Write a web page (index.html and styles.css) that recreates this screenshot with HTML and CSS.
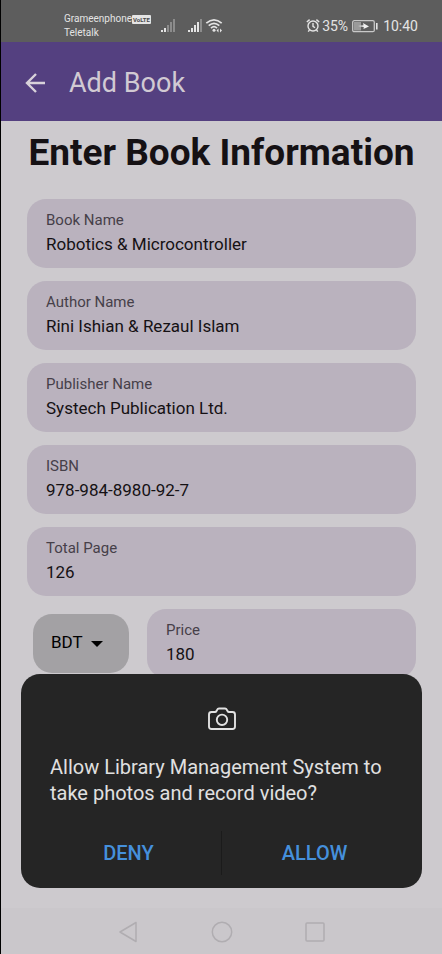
FILE: index.html
```html
<!DOCTYPE html>
<html lang="en">
<head>
<meta charset="utf-8">
<meta name="viewport" content="width=device-width, initial-scale=1">
<title>Add Book</title>
<link rel="stylesheet" href="styles.css">
</head>
<body>
<div class="screen">
  <div class="status">
    <div class="carriers">
      <div class="carrier">Grameenphone <span class="volte">VoLTE</span></div>
      <div class="carrier">Teletalk</div>
    </div>
    <svg class="signals" width="64" height="16" viewBox="0 0 64 16" aria-hidden="true">
      <g fill="#e4e4e4">
        <path d="M0 12h2v2H0zM3 10h2v4H3zM27 12h2v2h-2zM30 10h2v4h-2zM33 7h2v7h-2zM36 4h2v10h-2z"/>
        <path d="M6 7h2v7H6zM9 4h2v10H9zM12 1h2v13h-2zM39 1h2v13h-2z" opacity=".35"/>
        <circle cx="53" cy="12.300" r="1.500"/>
        <path d="M55.500 12.500 57.500 10.500v4zM61 12.500 59 10.500v4z"/>
      </g>
      <g fill="none" stroke="#e4e4e4" stroke-width="1.700">
        <path d="M45.300 5.200Q53-1.600 60.700 5.200M47.700 7.700Q53 3 58.300 7.700M50 10.100Q53 7.300 56 10.100"/>
      </g>
    </svg>
    <div class="power">
      <svg width="14" height="16" viewBox="0 0 14 16" fill="none" stroke="#e4e4e4" stroke-width="1.400" aria-hidden="true">
        <circle cx="7" cy="8" r="5"/><path d="M7 5v3.300l2 1.500M.8 4 3.600 1.600M13.200 4l-2.800-2.400M3.500 12l-1.300 1.600M10.500 12l1.300 1.600"/>
      </svg>
      <span>35%</span>
      <svg class="battery" width="26" height="14" viewBox="0 0 26 14" aria-hidden="true">
        <rect x=".7" y="1.700" width="21.600" height="11" rx="1.500" fill="none" stroke="#c8c8c8" stroke-width="1.300"/>
        <path d="M2 3h7v8.500H2z" fill="#9a9a9a"/>
        <path d="M24 4h1.600v6.500H24z" fill="#e4e4e4"/>
        <path d="M6 7.100 11.500 6.300 11 4 17 7.500l-5.500 2.400.3-1.900z" fill="#f0f0f0"/>
      </svg>
      <span>10:40</span>
    </div>
  </div>

  <header class="appbar">
    <button class="back" type="button" aria-label="Back">
      <svg width="20" height="20" viewBox="0 0 20 20" fill="none" stroke="currentColor" stroke-width="2.400"><path d="M20 10H2M11 1 2 10l9 9"/></svg>
    </button>
    <div class="appbar-title">Add Book</div>
  </header>

  <main class="content">
    <h1>Enter Book Information</h1>
    <form class="form">
      <div class="field"><label for="name">Book Name</label><input id="name" type="text" value="Robotics &amp; Microcontroller"></div>
      <div class="field"><label for="author">Author Name</label><input id="author" type="text" value="Rini Ishian &amp; Rezaul Islam"></div>
      <div class="field"><label for="publisher">Publisher Name</label><input id="publisher" type="text" value="Systech Publication Ltd."></div>
      <div class="field"><label for="isbn">ISBN</label><input id="isbn" type="text" value="978-984-8980-92-7"></div>
      <div class="field"><label for="pages">Total Page</label><input id="pages" type="text" value="126"></div>
      <div class="price-row">
        <div class="currency">
          <select aria-label="Currency"><option>BDT</option></select>
          <svg class="caret" width="12" height="6" viewBox="0 0 12 6" aria-hidden="true"><path d="M0 0h12L6 6z" fill="#000"/></svg>
        </div>
        <div class="field"><label for="price">Price</label><input id="price" type="text" value="180"></div>
      </div>
    </form>
  </main>

  <nav class="navbar">
    <button type="button" aria-label="Back"><svg width="22" height="22" viewBox="0 0 22 22"><path d="M18 1.500v19L2 11z"/></svg></button>
    <button type="button" aria-label="Home"><svg width="22" height="22" viewBox="0 0 22 22"><circle cx="11" cy="11" r="9.700"/></svg></button>
    <button type="button" aria-label="Recent apps"><svg width="22" height="22" viewBox="0 0 22 22"><rect x="2" y="2" width="18" height="18" rx="1"/></svg></button>
  </nav>

  <div class="dialog" role="dialog" aria-labelledby="question">
    <svg class="camera" width="28" height="24" viewBox="0 0 28 24" fill="none" stroke="#e2e2e2" stroke-width="1.900" stroke-linejoin="round" aria-hidden="true">
      <path d="M3.500 5H7q1 0 1.500-1l.7-1.300Q9.700 1.500 11 1.500h6q1.300 0 1.800 1.200L19.500 4q.5 1 1.500 1h3.500Q27 5 27 7.500v12q0 2.500-2.500 2.500h-21Q1 22 1 19.500v-12Q1 5 3.500 5z"/>
      <circle cx="14" cy="12.800" r="5.200"/>
    </svg>
    <p id="question">Allow Library Management System to take photos and record video?</p>
    <div class="actions">
      <button type="button">DENY</button>
      <button type="button">ALLOW</button>
    </div>
  </div>
</div>
</body>
</html>
```

FILE: styles.css
```css
* { box-sizing: border-box; }

body {
  margin: 0;
  background: #cdcace;
  color: #151114;
  font-family: Roboto, "Liberation Sans", sans-serif;
}

button, input, select { font: inherit; color: inherit; border: 0; padding: 0; margin: 0; background: none; }
button { cursor: pointer; }
svg { display: block; }

.screen {
  min-height: 100vh;
  display: flex;
  flex-direction: column;
  border-left: 1px solid #000;
}

.status {
  height: 42px;
  display: flex;
  align-items: center;
  padding: 10px 24px 0 63px;
  background: #5d5d5d;
  color: #e4e4e4;
}

.carriers { width: 97px; font-size: 10px; line-height: 14px; white-space: nowrap; }
.carrier { display: flex; align-items: center; }
.volte {
  padding: 0 1px;
  border-radius: 1px;
  background: #e4e4e4;
  color: #4a4a4a;
  font-size: 6px;
  line-height: 9px;
  font-weight: 700;
}

.power {
  margin-left: auto;
  display: flex;
  align-items: center;
  gap: 2px;
  font-size: 14px;
  line-height: 20px;
}
.battery { margin: 0 3px 0 2px; }

.appbar {
  height: 79px;
  display: flex;
  align-items: center;
  gap: 24px;
  padding: 2px 24px 0;
  background: #544080;
  color: #d1cad3;
}
.back { color: #d8d2da; }
.appbar-title { font-size: 27px; line-height: 32px; }

.content { flex: 1; padding: 9px 26px 0; }

h1 {
  margin: 0;
  font-size: 37px;
  line-height: 46px;
  font-weight: 700;
  text-align: center;
  white-space: nowrap;
}

.form {
  display: flex;
  flex-direction: column;
  gap: 13px;
  padding-top: 23px;
}

.field {
  height: 69px;
  min-width: 0;
  flex: 1 1 auto;
  display: flex;
  flex-direction: column;
  padding: 10px 19px 0;
  border-radius: 19px;
  background: #bab2be;
}
.field label { color: #464049; font-size: 15px; line-height: 22px; }
.field input { width: 100%; height: 26px; font-size: 17px; line-height: 26px; outline: 0; }

.price-row { display: flex; gap: 18px; padding-left: 6px; }

.currency {
  width: 96px;
  height: 59px;
  margin-top: 5px;
  position: relative;
  border-radius: 19px;
  background: #a3a1a4;
}
.currency select {
  width: 100%;
  height: 100%;
  padding: 0 18px 4px;
  appearance: none;
  color: #000;
  font-size: 17px;
}
.caret { position: absolute; right: 26px; top: 27px; pointer-events: none; }

.navbar {
  height: 46px;
  display: flex;
  justify-content: center;
  align-items: center;
  gap: 71px;
  padding-top: 2px;
  background: #cac7cb;
}
.navbar svg { fill: none; stroke: #b0adb1; stroke-width: 1.500; stroke-linejoin: round; }

.dialog {
  position: fixed;
  left: 21px;
  right: 20px;
  bottom: 66px;
  padding: 33px 29px 13px;
  border-radius: 19px;
  background: #252525;
  color: #e0e0e0;
}
.camera { margin: 0 auto; }
.dialog p { margin: 23px 0 25px; font-size: 20px; line-height: 26px; }

.actions { display: flex; margin: 0 -14px; }
.actions button {
  flex: 1;
  height: 44px;
  color: #4590dc;
  font-size: 20px;
  font-weight: 500;
}
.actions button + button { border-left: 1px solid #1b1b1b; }
```
